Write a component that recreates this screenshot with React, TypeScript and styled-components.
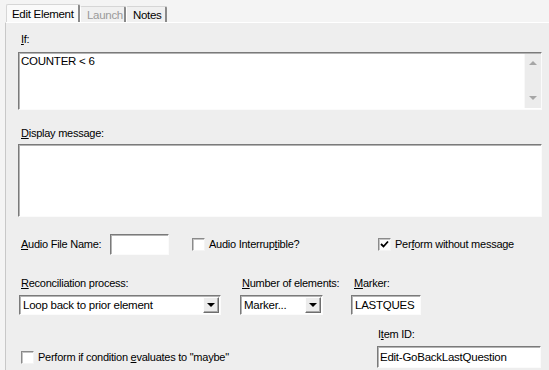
import React from 'react';
import styled, { createGlobalStyle } from 'styled-components';

const GlobalStyle = createGlobalStyle`
  html, body {
    margin: 0;
    padding: 0;
    background: #f2f2f2;
  }

  body {
    font-family: "Liberation Sans", Arial, sans-serif;
    font-size: 11px;
    letter-spacing: -0.25px;
    color: #000;
  }
`;

const Window = styled.div`
  width: 549px;
  height: 370px;
  overflow: hidden;
  background: #f4f4f4;
  display: flex;
  flex-direction: column;
`;

const TabBar = styled.div`
  display: flex;
  align-items: flex-end;
  height: 22px;
  padding-left: 6px;
  flex-shrink: 0;
`;

const Tab = styled.div<{ $width: number; $active?: boolean; $disabled?: boolean }>`
  box-sizing: border-box;
  width: ${p => p.$width}px;
  height: ${p => (p.$active ? 18 : 16)}px;
  padding-left: ${p => (p.$active ? 5 : 6)}px;
  display: flex;
  align-items: center;
  white-space: nowrap;
  background: ${p => (p.$active ? '#fafafa' : '#f0f0f0')};
  color: ${p => (p.$disabled ? '#9a9a9a' : '#000')};
  border-top: 1px solid #d6d6d6;
  border-left: 1px solid ${p => (p.$active ? '#d6d6d6' : '#ffffff')};
  border-right: 2px solid #8a8a8a;
  border-radius: 2px 2px 0 0;
  font-size: 11.5px;
  letter-spacing: -0.3px;
`;

const Panel = styled.div`
  flex: 1;
  margin-left: 5px;
  border-top: 1px solid #ffffff;
  border-left: 1px solid #c8c8c8;
  background: #eeeeee;
  padding: 10px 0 0 12px;
  display: flex;
  flex-direction: column;
`;

const Label = styled.div<{ $indent?: number }>`
  height: 13px;
  line-height: 13px;
  padding-left: ${p => p.$indent ?? 3}px;
  white-space: nowrap;
`;

const U = styled.span`
  text-decoration: underline;
`;

const TextBox = styled.div<{ $height: number; $top: number }>`
  box-sizing: border-box;
  width: 524px;
  height: ${p => p.$height}px;
  margin-top: ${p => p.$top}px;
  background: #fff;
  border: 1px solid;
  border-color: #7a7a7a #fbfbfb #fbfbfb #7a7a7a;
  box-shadow: inset 1px 1px 0 #b4b4b4;
  display: flex;
`;

const TextContent = styled.div`
  flex: 1;
  padding: 2px 2px;
  line-height: 13px;
  font-size: 11.5px;
`;

const ScrollBar = styled.div`
  width: 16px;
  margin: 1px 0;
  background: #ececec;
  border-left: 1px solid #f8f8f8;
  display: flex;
  flex-direction: column;
  justify-content: space-between;
  align-items: center;
  padding: 7px 0 8px;
`;

const Arrow = styled.div<{ $dir: 'up' | 'down'; $color?: string }>`
  width: 0;
  height: 0;
  border-left: 4px solid transparent;
  border-right: 4px solid transparent;
  ${p =>
    p.$dir === 'up'
      ? `border-bottom: 4px solid ${p.$color ?? '#a6a6a6'};`
      : `border-top: 4px solid ${p.$color ?? '#a6a6a6'};`}
`;

const Row = styled.div<{ $top: number }>`
  display: flex;
  align-items: center;
  margin-top: ${p => p.$top}px;
`;

const BottomRow = styled.div`
  display: flex;
  align-items: flex-end;
  justify-content: space-between;
  width: 523px;
  margin-top: 13px;
`;

const FixedLabel = styled(Label)<{ $width: number }>`
  width: ${p => p.$width}px;
  box-sizing: border-box;
`;

const Input = styled.div<{ $width: number; $height?: number; $pad?: number }>`
  box-sizing: border-box;
  width: ${p => p.$width}px;
  height: ${p => p.$height ?? 21}px;
  background: #fff;
  border: 1px solid;
  border-color: #7a7a7a #fbfbfb #fbfbfb #7a7a7a;
  box-shadow: inset 1px 1px 0 #b4b4b4;
  padding-left: ${p => p.$pad ?? 3}px;
  display: flex;
  align-items: center;
  white-space: nowrap;
  overflow: hidden;
  font-size: 11.5px;
`;

const CheckField = styled.div<{ $width?: number; $left?: number }>`
  display: flex;
  align-items: center;
  gap: 4px;
  width: ${p => (p.$width ? `${p.$width}px` : 'auto')};
  margin-left: ${p => p.$left ?? 0}px;
  height: 22px;
  white-space: nowrap;
`;

const CheckBox = styled.div`
  box-sizing: border-box;
  width: 13px;
  height: 13px;
  background: #fff;
  border: 1px solid;
  border-color: #8a8a8a #f4f4f4 #f4f4f4 #8a8a8a;
  box-shadow: inset 1px 1px 0 #c4c4c4;
  display: flex;
  align-items: center;
  justify-content: center;
`;

const Column = styled.div<{ $width: number; $after?: number }>`
  display: flex;
  flex-direction: column;
  gap: 5px;
  width: ${p => p.$width}px;
  margin-right: ${p => p.$after ?? 0}px;
`;

const Select = styled.div<{ $width: number }>`
  box-sizing: border-box;
  width: ${p => p.$width}px;
  height: 20px;
  background: #fff;
  border: 1px solid;
  border-color: #7a7a7a #fbfbfb #fbfbfb #7a7a7a;
  box-shadow: inset 1px 1px 0 #b4b4b4;
  display: flex;
  align-items: stretch;
  padding: 1px;
  font-size: 11.5px;
`;

const SelectText = styled.div`
  flex: 1;
  display: flex;
  align-items: center;
  padding-left: 2px;
  white-space: nowrap;
  overflow: hidden;
`;

const DropButton = styled.div`
  box-sizing: border-box;
  width: 16px;
  background: #ececec;
  border: 1px solid;
  border-color: #fdfdfd #6e6e6e #6e6e6e #fdfdfd;
  box-shadow: inset -1px -1px 0 #a8a8a8;
  display: flex;
  align-items: center;
  justify-content: center;
`;

const Check = () => (
  <svg width="9" height="9" viewBox="0 0 9 9">
    <path d="M1 4 L3.5 6.5 L8 1.5" fill="none" stroke="#000" strokeWidth="1.8" />
  </svg>
);

const App = () => (
  <>
    <GlobalStyle />
    <Window>
      <TabBar>
        <Tab $width={74} $active>
          Edit Element
        </Tab>
        <Tab $width={46} $disabled>
          Launch
        </Tab>
        <Tab $width={41}>Notes</Tab>
      </TabBar>
      <Panel>
        <Label>
          <U>I</U>f:
        </Label>
        <TextBox $height={58} $top={6}>
          <TextContent>COUNTER &lt; 6</TextContent>
          <ScrollBar>
            <Arrow $dir="up" />
            <Arrow $dir="down" />
          </ScrollBar>
        </TextBox>

        <Label style={{ marginTop: 17 }}>
          <U>D</U>isplay message:
        </Label>
        <TextBox $height={73} $top={4}>
          <TextContent />
        </TextBox>

        <Row $top={16}>
          <FixedLabel $width={92}>
            <U>A</U>udio File Name:
          </FixedLabel>
          <Input $width={59} />
          <CheckField $left={23} $width={186}>
            <CheckBox />
            <span>
              Audio Interrup<U>t</U>ible?
            </span>
          </CheckField>
          <CheckField>
            <CheckBox>
              <Check />
            </CheckBox>
            <span>
              Per<U>f</U>orm without message
            </span>
          </CheckField>
        </Row>

        <Row $top={22} style={{ alignItems: 'flex-start', paddingLeft: 1 }}>
          <Column $width={202} $after={19}>
            <Label $indent={2}>
              <U>R</U>econciliation process:
            </Label>
            <Select $width={202}>
              <SelectText>Loop back to prior element</SelectText>
              <DropButton>
                <Arrow $dir="down" $color="#000" />
              </DropButton>
            </Select>
          </Column>
          <Column $width={83} $after={28}>
            <Label $indent={2}>
              <U>N</U>umber of elements:
            </Label>
            <Select $width={83}>
              <SelectText>Marker...</SelectText>
              <DropButton>
                <Arrow $dir="down" $color="#000" />
              </DropButton>
            </Select>
          </Column>
          <Column $width={70}>
            <Label>
              <U>M</U>arker:
            </Label>
            <Input $width={70} $height={20}>
              LASTQUES
            </Input>
          </Column>
        </Row>

        <BottomRow>
          <CheckField $left={3}>
            <CheckBox />
            <span>
              Perform if condition <U>e</U>valuates to &quot;maybe&quot;
            </span>
          </CheckField>
          <Column $width={164}>
            <Label $indent={1}>
              I<U>t</U>em ID:
            </Label>
            <Input $width={164} $height={22} $pad={2}>
              Edit-GoBackLastQuestion
            </Input>
          </Column>
        </BottomRow>
      </Panel>
    </Window>
  </>
);

export default App;
